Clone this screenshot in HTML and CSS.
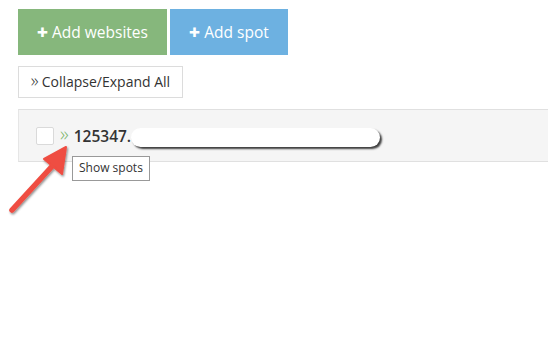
FILE: index.html
```html
<!DOCTYPE html>
<html>
<head>
<meta charset="utf-8">
<link rel="stylesheet" href="styles.css">
</head>
<body>
<div class="page">
  <div class="actions">
    <button class="btn btn-green"><span class="plus">&#10010;</span>Add websites</button>
    <button class="btn btn-blue"><span class="plus">&#10010;</span>Add spot</button>
  </div>
  <div class="toggle-row">
    <button class="btn-outline"><span class="raq">&raquo;</span>Collapse/Expand All</button>
  </div>
  <div class="panel">
    <span class="check"></span>
    <span class="chev">&raquo;</span>
    <span class="site-id">125347.</span>
    <span class="redact"></span>
    <span class="tooltip">Show spots</span>
  </div>
  <svg class="pointer" width="80" height="90" viewBox="0 0 80 90">
    <defs>
      <filter id="sh" x="-20%" y="-20%" width="140%" height="140%">
        <feDropShadow dx="1" dy="1.5" stdDeviation="1.2" flood-color="#000" flood-opacity="0.45"/>
      </filter>
    </defs>
    <g filter="url(#sh)">
      <line x1="12" y1="80" x2="56" y2="32" stroke="#ef4d42" stroke-width="5.5" stroke-linecap="round"/>
      <polygon points="66,17 62,44 44,29" fill="#ef4d42" stroke="#ef4d42" stroke-width="2" stroke-linejoin="round"/>
    </g>
  </svg>
</div>
</body>
</html>
```
FILE: styles.css
```css
* { box-sizing: border-box; }
html, body { margin: 0; padding: 0; background: #fff; }
body { font-family: "Open Sans", "Liberation Sans", sans-serif; color: #333; overflow: hidden; }
.page { position: relative; width: 548px; height: 337px; padding: 9px 0 0 18px; }
.actions { display: flex; gap: 3px; height: 46px; }
.btn {
  border: 0; color: #fff; font-family: "Open Sans", sans-serif; font-size: 15.5px;
  padding: 0 0 1px 0; display: flex; align-items: center; justify-content: center; height: 46px;
}
.btn-green { background: #86b77c; width: 149px; }
.btn-blue { background: #6db1e1; width: 118px; }
.plus { font-size: 13px; margin-right: 4px; }
.toggle-row { margin-top: 11px; }
.btn-outline {
  background: #fff; border: 1px solid #dcdcdc; height: 32px; width: 165px; font-family: "Open Sans", sans-serif;
  font-size: 14px; color: #333; padding: 0 0 2px 0; display: flex; align-items: center; justify-content: center;
}
.raq { font-size: 18px; font-weight: 300; line-height: 1; margin-right: 3px; margin-top: -3px; }
.panel {
  position: relative; margin-top: 11px; height: 53px; background: #f5f5f5;
  border-top: 1px solid #e0e0e0; border-bottom: 1px solid #e0e0e0; border-left: 1px solid #e6e6e6;
  display: flex; align-items: center; padding: 0 0 0 17px; margin-right: -10px;
}
.check { width: 18px; height: 18px; background: #fff; border: 1px solid #dadada; border-radius: 2px; margin-top: 1px; }
.chev { color: #7eb56e; font-size: 20px; font-weight: 300; margin-left: 6px; line-height: 1; margin-top: -3px; }
.site-id { font-size: 15.5px; font-weight: 600; color: #333; margin-left: 5px; }
.redact {
  width: 249px; height: 19px; background: #fff; border-radius: 10px; margin-left: 0; margin-top: 3px;
  box-shadow: 2px 2px 2px rgba(0,0,0,0.75);
}
.tooltip {
  position: absolute; left: 53px; top: 46px; background: #fff; border: 1px solid #999;
  font-size: 12px; color: #333; padding: 2px 6px 3px; line-height: 18px;
}
.pointer { position: absolute; left: 0; top: 130px; }
```
